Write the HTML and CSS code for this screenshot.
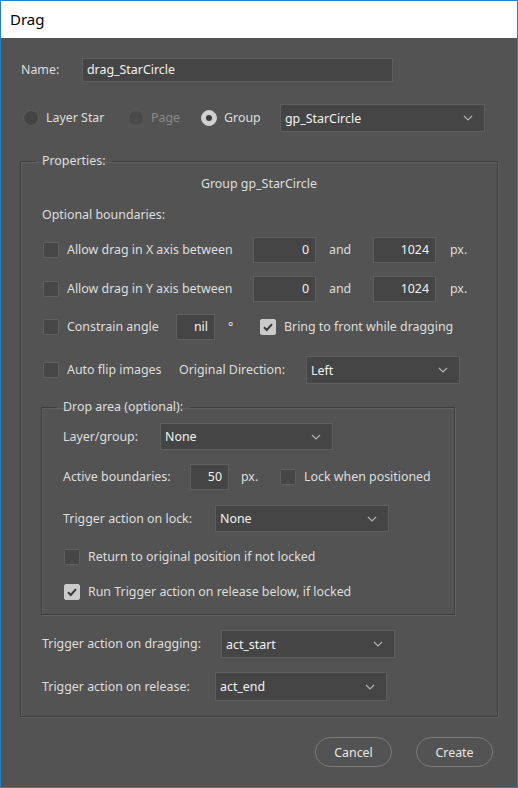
FILE: index.html
```html
<!DOCTYPE html>
<html>
<head>
<meta charset="utf-8">
<link rel="stylesheet" href="styles.css">
</head>
<body>
<div class="window">
  <div class="titlebar">Drag</div>
  <div class="content">
    <div class="row name-row">
      <span class="lbl name-lbl">Name:</span>
      <div class="field name-field">drag_StarCircle</div>
    </div>
    <div class="row radio-row">
      <span class="radio"></span><span class="lbl r-lbl w-layer">Layer Star</span>
      <span class="radio disabled"></span><span class="lbl r-lbl disabled-text w-page">Page</span>
      <span class="radio on"></span><span class="lbl r-lbl w-group">Group</span>
      <div class="select sel-group"><span>gp_StarCircle</span><svg class="chev" width="10" height="6" viewBox="0 0 10 6"><polyline points="1,1 5,5 9,1"/></svg></div>
    </div>

    <fieldset class="group props">
      <legend>Properties:</legend>
      <div class="center-line">Group gp_StarCircle</div>
      <div class="line opt">Optional boundaries:</div>

      <div class="row axis-row first-axis">
        <span class="check"></span><span class="lbl axis-lbl">Allow drag in X axis between</span>
        <div class="field num w63">0</div><span class="lbl and">and</span>
        <div class="field num w63">1024</div><span class="lbl px">px.</span>
      </div>
      <div class="row axis-row second-axis">
        <span class="check"></span><span class="lbl axis-lbl">Allow drag in Y axis between</span>
        <div class="field num w63">0</div><span class="lbl and">and</span>
        <div class="field num w63">1024</div><span class="lbl px">px.</span>
      </div>
      <div class="row angle-row">
        <span class="check"></span><span class="lbl angle-lbl">Constrain angle</span>
        <div class="field num w39">nil</div><span class="lbl deg">°</span>
        <span class="check on"><svg width="16" height="16" viewBox="0 0 16 16"><polyline points="4,8.2 6.8,11 12,5.2"/></svg></span><span class="lbl">Bring to front while dragging</span>
      </div>
      <div class="row flip-row">
        <span class="check"></span><span class="lbl flip-lbl">Auto flip images</span>
        <span class="lbl dir-lbl">Original Direction:</span>
        <div class="select sel-dir"><span>Left</span><svg class="chev" width="10" height="6" viewBox="0 0 10 6"><polyline points="1,1 5,5 9,1"/></svg></div>
      </div>

      <fieldset class="group drop">
        <legend>Drop area (optional):</legend>
        <div class="row layer-row">
          <span class="lbl layer-lbl">Layer/group:</span>
          <div class="select sel-layer"><span>None</span><svg class="chev" width="10" height="6" viewBox="0 0 10 6"><polyline points="1,1 5,5 9,1"/></svg></div>
        </div>
        <div class="row active-row">
          <span class="lbl active-lbl">Active boundaries:</span>
          <div class="field num w39">50</div><span class="lbl px2">px.</span>
          <span class="check"></span><span class="lbl">Lock when positioned</span>
        </div>
        <div class="row lock-row">
          <span class="lbl lock-lbl">Trigger action on lock:</span>
          <div class="select sel-lock"><span>None</span><svg class="chev" width="10" height="6" viewBox="0 0 10 6"><polyline points="1,1 5,5 9,1"/></svg></div>
        </div>
        <div class="row cb-row return-row">
          <span class="check"></span><span class="lbl">Return to original position if not locked</span>
        </div>
        <div class="row cb-row run-row">
          <span class="check on"><svg width="16" height="16" viewBox="0 0 16 16"><polyline points="4,8.2 6.8,11 12,5.2"/></svg></span><span class="lbl">Run Trigger action on release below, if locked</span>
        </div>
      </fieldset>

      <div class="row drag-row">
        <span class="lbl drag-lbl">Trigger action on dragging:</span>
        <div class="select sel-act"><span>act_start</span><svg class="chev" width="10" height="6" viewBox="0 0 10 6"><polyline points="1,1 5,5 9,1"/></svg></div>
      </div>
      <div class="row release-row">
        <span class="lbl release-lbl">Trigger action on release:</span>
        <div class="select sel-rel"><span>act_end</span><svg class="chev" width="10" height="6" viewBox="0 0 10 6"><polyline points="1,1 5,5 9,1"/></svg></div>
      </div>
    </fieldset>

    <div class="buttons">
      <button class="btn">Cancel</button>
      <button class="btn">Create</button>
    </div>
  </div>
</div>
</body>
</html>
```
FILE: styles.css
```css
* { box-sizing: border-box; }
html, body { margin: 0; padding: 0; }
body {
  width: 518px;
  height: 788px;
  font-family: "Noto Sans", "Open Sans", sans-serif;
  font-size: 12.4px;
  color: #dedede;
  background: #535353;
}
.window {
  width: 518px;
  height: 788px;
  border: 1px solid #1883d7;
  display: flex;
  flex-direction: column;
  background: #535353;
}
.titlebar {
  height: 37px;
  flex: none;
  background: #ffffff;
  color: #000;
  font-size: 15px;
  line-height: 37px;
  padding-left: 9px;
}
.content {
  flex: 1;
  padding: 20px 19px 0 19px;
}
.row {
  display: flex;
  align-items: center;
}
.lbl { white-space: nowrap; line-height: 16px; }

.field {
  height: 26px;
  background: #454545;
  border: 1px solid #5e5e5e;
  color: #f2f2f2;
  line-height: 24px;
  padding: 0 6px;
}
.field.num { text-align: right; }
.w63 { width: 63px; }
.w39 { width: 39px; }

.select {
  height: 28px;
  background: #454545;
  border: 1px solid #5e5e5e;
  color: #f2f2f2;
  display: flex;
  align-items: center;
  justify-content: space-between;
  padding: 0 11px 0 4px;
}
.chev polyline {
  fill: none;
  stroke: #b0b0b0;
  stroke-width: 1.2;
}

/* name row */
.name-row { height: 24px; }
.name-lbl { margin-left: 1px; width: 61px; }
.name-field { width: 311px; height: 24px; line-height: 22px; padding-left: 4px; }

/* radio row */
.radio-row { margin-top: 22px; padding-left: 3px; }
.radio {
  width: 16px; height: 16px;
  border-radius: 50%;
  background: #444;
  border: 1px solid #5c5c5c;
  flex: none;
  position: relative;
}
.radio.disabled { background: #4a4a4a; border-color: #585858; }
.radio.on { background: #d0d0d0; border-color: #d0d0d0; }
.radio.on::after {
  content: "";
  position: absolute;
  left: 4px; top: 4px;
  width: 6px; height: 6px;
  border-radius: 50%;
  background: #3c3c3c;
}
.r-lbl { margin-left: 7px; }
.w-layer { width: 82px; }
.w-page { width: 50px; }
.w-group { width: 56px; }
.disabled-text { color: #8a8a8a; }
.sel-group { width: 205px; }

/* fieldsets */
.group {
  margin: 0;
  border: 1px solid #3e3e3e;
  box-shadow: 1px 1px 0 #616161, inset 1px 1px 0 #616161;
  min-width: 0;
}
.group legend {
  padding: 0 6px;
  line-height: 16px;
  color: #dedede;
  margin-left: -6px;
}
.props {
  margin-top: 21px;
  width: 478px;
  padding: 0 0 15px 21px;
}
.center-line { margin-top: 7px; text-align: center; line-height: 16px; padding-right: 21px; }
.line.opt { margin-top: 15px; line-height: 16px; }

.check {
  width: 16px; height: 16px;
  flex: none;
  border-radius: 2px;
  background: #464646;
  border: 1px solid #5f5f5f;
  margin-left: 1px;
  margin-right: 8px;
  display: flex;
}
.check.on { background: #cbcbcb; border-color: #cbcbcb; }
.check svg { margin: -1px; }
.check polyline { fill: none; stroke: #3a3a3a; stroke-width: 2; }

.axis-row { height: 26px; }
.first-axis { margin-top: 14px; }
.second-axis { margin-top: 13px; }
.axis-lbl { width: 186px; }
.and { width: 57px; padding-left: 13px; }
.px { padding-left: 14px; }

.angle-row { margin-top: 12px; height: 26px; }
.angle-lbl { width: 109px; }
.deg { width: 44px; padding-left: 13px; }

.flip-row { margin-top: 16px; height: 28px; }
.flip-lbl { width: 112px; }
.dir-lbl { width: 127px; }
.sel-dir { width: 154px; }

.drop {
  margin: 15px 0 0 -1px;
  width: 414px;
  padding: 0 0 14px 21px;
}
.layer-row { margin-top: 8px; height: 27px; }
.layer-lbl { width: 97px; }
.sel-layer { width: 173px; height: 27px; }

.active-row { margin-top: 14px; height: 26px; }
.active-lbl { width: 127px; }
.px2 { width: 50px; padding-left: 12px; }

.lock-row { margin-top: 15px; height: 27px; }
.lock-lbl { width: 152px; }
.sel-lock { width: 174px; height: 27px; }

.cb-row { height: 16px; }
.return-row { margin-top: 17px; }
.run-row { margin-top: 19px; }

.drag-row { margin-top: 15px; height: 28px; }
.drag-lbl { width: 179px; }
.sel-act { width: 174px; }

.release-row { margin-top: 14px; height: 29px; }
.release-lbl { width: 173px; }
.sel-rel { width: 172px; height: 29px; }

.buttons {
  display: flex;
  justify-content: flex-end;
  gap: 24px;
  margin-top: 20px;
  padding-right: 5px;
}
.btn {
  width: 77px;
  height: 30px;
  border-radius: 15px;
  border: 1px solid #7b7b7b;
  background: transparent;
  color: #e6e6e6;
  font-family: "Noto Sans", "Open Sans", sans-serif;
  font-size: 12.4px;
  padding: 0;
}
```
